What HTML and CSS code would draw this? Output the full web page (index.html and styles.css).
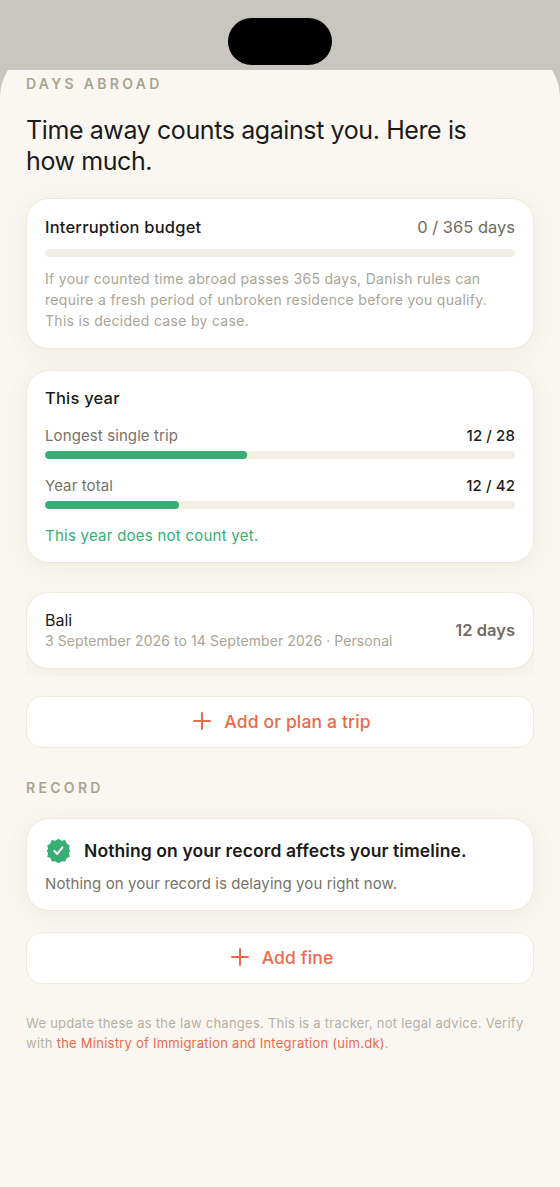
FILE: index.html
```html
<!DOCTYPE html>
<html lang="en">
<head>
  <meta charset="UTF-8">
  <meta name="viewport" content="width=device-width, initial-scale=1.0">
  <title>Days abroad</title>
  <link rel="stylesheet" href="styles.css">
</head>
<body>
  <div class="status-bar">
    <div class="island"></div>
  </div>

  <main class="sheet">
    <h2 class="section-label">DAYS ABROAD</h2>
    <h1 class="intro">Time away counts against you. Here is how much.</h1>

    <section class="card budget-card">
      <div class="row">
        <span class="card-title">Interruption budget</span>
        <span class="budget-count">0 / 365 days</span>
      </div>
      <div class="bar budget-bar"></div>
      <p class="hint">If your counted time abroad passes 365 days, Danish rules can require a fresh period of unbroken residence before you qualify. This is decided case by case.</p>
    </section>

    <section class="card year-card">
      <div class="card-title">This year</div>
      <div class="row meter-row">
        <span class="meter-label">Longest single trip</span>
        <span class="meter-value">12 / 28</span>
      </div>
      <div class="bar"><div class="bar-fill" style="width: 42.9%"></div></div>
      <div class="row meter-row second">
        <span class="meter-label">Year total</span>
        <span class="meter-value">12 / 42</span>
      </div>
      <div class="bar"><div class="bar-fill" style="width: 28.6%"></div></div>
      <p class="year-note">This year does not count yet.</p>
    </section>

    <div class="trip-list">
      <section class="card trip-card">
        <div>
          <div class="trip-name">Bali</div>
          <div class="trip-dates">3 September 2026 to 14 September 2026 · Personal</div>
        </div>
        <span class="trip-days">12 days</span>
      </section>
    </div>

    <button class="add-button trip-button">
      <svg class="plus" viewBox="0 0 18 18" width="18" height="18"><path d="M9 1v16M1 9h16"/></svg>
      Add or plan a trip
    </button>

    <h2 class="section-label record-label">RECORD</h2>

    <section class="card record-card">
      <div class="record-head">
        <svg class="badge" viewBox="0 0 24 24" width="25" height="25">
          <path fill="#38ae74" d="M12 .6l3 2 3.500-.6 1.300 3.300 3 1.900-.8 3.500 1.400 1.300-1.400 2.600.8 3.300-3 1.300-1.300 3.300-3.500-.3-3 2.200-3-2.200-3.500.3-1.300-3.300-3-1.300.8-3.300L.6 12l1.400-1.300-.8-3.500 3-1.900L5.500 2l3.500.6z"/>
          <path fill="none" stroke="#fff" stroke-width="2" stroke-linecap="round" stroke-linejoin="round" d="M8 12.500l2.800 2.800 5-6.300"/>
        </svg>
        <span class="record-title">Nothing on your record affects your timeline.</span>
      </div>
      <p class="record-text">Nothing on your record is delaying you right now.</p>
    </section>

    <button class="add-button fine-button">
      <svg class="plus" viewBox="0 0 18 18" width="18" height="18"><path d="M9 1v16M1 9h16"/></svg>
      Add fine
    </button>

    <p class="footnote">We update these as the law changes. This is a tracker, not legal advice. Verify with <a href="#">the Ministry of Immigration and Integration (uim.dk)</a>.</p>
  </main>
</body>
</html>
```

FILE: styles.css
```css
* {
  box-sizing: border-box;
}

body {
  margin: 0;
  height: 1187px;
  overflow: hidden;
  background-color: #c9c6c1;
  font-family: Inter, 'Liberation Sans', sans-serif;
  color: #1c1b19;
}

/* sits over the top of the sheet so the rounded corners get cut off flat */
.status-bar {
  position: relative;
  z-index: 1;
  height: 70px;
  background-color: #c9c6c1;
}

.island {
  position: absolute;
  top: 18px;
  left: 228px;
  width: 104px;
  height: 47px;
  border-radius: 24px;
  background-color: #000;
}

.sheet {
  height: 1142px;
  margin-top: -25px;
  padding: 31px 26px 0;
  background-color: #faf7f2;
  border-radius: 53px 53px 0 0;
}

.section-label {
  margin: 0;
  font-size: 14px;
  line-height: 16px;
  font-weight: 600;
  letter-spacing: 3.3px;
  color: #a9a491;
}

.intro {
  max-width: 470px;
  margin: 23px 0 21px;
  font-size: 25px;
  line-height: 31px;
  font-weight: 400;
  letter-spacing: -0.4px;
  color: #1c1b19;
}

.card {
  background: #fff;
  border: 1px solid #f0e9dc;
  border-radius: 23px;
  box-shadow: 0 4px 26px rgba(90, 75, 40, 0.07);
}

.row {
  display: flex;
  justify-content: space-between;
  align-items: center;
}

.card-title {
  font-size: 16.5px;
  line-height: 22px;
  font-weight: 500;
  letter-spacing: 0.2px;
  color: #1c1b19;
}

.budget-card {
  height: 151px;
  padding: 17px 18px 0;
}

.budget-count {
  font-size: 16.5px;
  color: #6f6b62;
}

.bar {
  height: 8px;
  border-radius: 4px;
  background-color: #f3eee3;
  overflow: hidden;
}

.bar-fill {
  height: 100%;
  border-radius: 4px;
  background-color: #38ae74;
}

.budget-bar {
  margin-top: 11px;
}

.hint {
  margin: 11px 0 0;
  font-size: 14px;
  line-height: 21px;
  letter-spacing: 0.3px;
  color: #a9a596;
}

.year-card {
  height: 193px;
  margin-top: 21px;
  padding: 16px 18px 0;
}

.meter-row {
  margin-top: 15px;
  margin-bottom: 5px;
  height: 22px;
}

.meter-row.second {
  margin-top: 15px;
}

.meter-label {
  font-size: 15px;
  letter-spacing: 0.1px;
  color: #77736a;
}

.meter-value {
  font-size: 15px;
  font-weight: 500;
  letter-spacing: 0.1px;
  color: #1c1b19;
}

.year-note {
  margin: 16px 0 0;
  font-size: 15px;
  line-height: 22px;
  letter-spacing: 0.25px;
  color: #38ae74;
}

.trip-list {
  margin-top: 29px;
  height: 84px;
  overflow: hidden;
}

.trip-card {
  display: flex;
  justify-content: space-between;
  align-items: center;
  height: 77px;
  padding: 0 18px;
}

.trip-name {
  font-size: 16px;
  line-height: 20px;
  color: #1c1b19;
}

.trip-dates {
  margin-top: 1px;
  font-size: 14px;
  line-height: 20px;
  letter-spacing: 0.08px;
  color: #a9a596;
}

.trip-days {
  margin-bottom: 1px;
  font-size: 16.5px;
  font-weight: 600;
  color: #6f6b62;
}

.add-button {
  display: flex;
  justify-content: center;
  align-items: center;
  gap: 13px;
  width: 100%;
  height: 52px;
  padding: 0 0 2px 4px;
  background: #fff;
  border: 1px solid #efe9dd;
  border-radius: 16px;
  font-family: inherit;
  font-size: 17.5px;
  font-weight: 500;
  letter-spacing: 0.15px;
  color: #f0684a;
}

.plus {
  fill: none;
  stroke: #f0684a;
  stroke-width: 2;
  stroke-linecap: round;
}

.trip-button {
  margin-top: 20px;
}

.record-label {
  margin-top: 32px;
}

.record-card {
  height: 93px;
  margin-top: 22px;
  padding: 15px 18px 0;
}

.record-head {
  display: flex;
  align-items: center;
  gap: 13px;
  height: 32px;
}

.badge {
  flex-shrink: 0;
  margin-left: 1px;
}

.record-title {
  font-size: 17.5px;
  font-weight: 600;
  letter-spacing: 0.1px;
  color: #1c1b19;
}

.record-text {
  margin: 8px 0 0;
  font-size: 15px;
  line-height: 20px;
  letter-spacing: 0.08px;
  color: #77736a;
}

.fine-button {
  margin-top: 21px;
}

.footnote {
  margin: 29px 0 0;
  font-size: 13px;
  line-height: 20px;
  letter-spacing: 0.25px;
  color: #b5b1a3;
}

.footnote a {
  color: #f0684a;
  text-decoration: none;
}
```
